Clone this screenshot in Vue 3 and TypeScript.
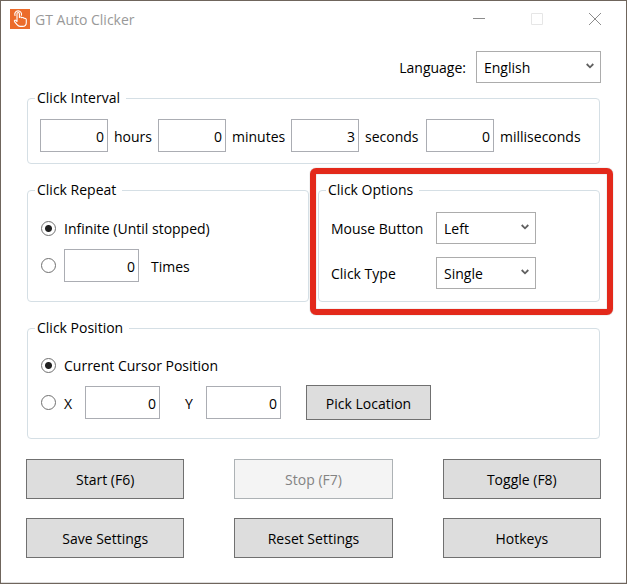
<script setup lang="ts">
import { ref } from 'vue'

interface Interval {
  id: string
  unit: string
  value: string
}

interface Action {
  label: string
  disabled?: boolean
}

const language = ref('English')
const intervals = ref<Interval[]>([
  { id: 'hours', unit: 'hours', value: '0' },
  { id: 'minutes', unit: 'minutes', value: '0' },
  { id: 'seconds', unit: 'seconds', value: '3' },
  { id: 'milliseconds', unit: 'milliseconds', value: '0' },
])
const repeat = ref<'infinite' | 'times'>('infinite')
const times = ref('0')
const mouseButton = ref('Left')
const clickType = ref('Single')
const position = ref<'cursor' | 'point'>('cursor')
const x = ref('0')
const y = ref('0')

const actions: Action[] = [
  { label: 'Start (F6)' },
  { label: 'Stop (F7)', disabled: true },
  { label: 'Toggle (F8)' },
  { label: 'Save Settings' },
  { label: 'Reset Settings' },
  { label: 'Hotkeys' },
]
</script>

<template>
  <main class="window">
    <header class="titlebar">
      <svg class="app-icon" viewBox="0 0 20 20" aria-hidden="true">
        <rect width="20" height="20" fill="#ec6c2b" />
        <path
          d="M7 12.500V4.700a1.200 1.200 0 0 1 2.400 0V8.500c.6-.8 2-.6 2.300.3.8-.6 2-.3 2.300.6 1-.3 2.300.2 2.300 1.400v2.700c0 2.200-1.500 3.900-3.700 3.900H10c-1.400 0-2.200-.7-3-1.700L4.500 12.600c-.5-1 .5-1.800 1.300-1.200L7 12.500M5 6.500a3.400 3.400 0 1 1 6.400-.2"
          fill="none" stroke="#fff" stroke-width="1.1" stroke-linejoin="round" stroke-linecap="round"
        />
      </svg>
      <h1 class="title">GT Auto Clicker</h1>
      <div class="controls">
        <button class="control" type="button" aria-label="Minimize">
          <svg viewBox="0 0 12 12"><path d="M0 5.5h12" stroke="#8c8c8c" fill="none" /></svg>
        </button>
        <button class="control" type="button" aria-label="Maximize" disabled>
          <svg viewBox="0 0 12 12"><path d="M.5.5h11v11H.5z" stroke="#e6e6e6" fill="none" /></svg>
        </button>
        <button class="control" type="button" aria-label="Close">
          <svg viewBox="0 0 12 12"><path d="M0 0l12 12M12 0L0 12" stroke="#8c8c8c" fill="none" /></svg>
        </button>
      </div>
    </header>

    <form class="content" @submit.prevent>
      <div class="language">
        <label for="language">Language:</label>
        <div class="select language-select">
          <select id="language" v-model="language"><option>English</option></select>
          <svg class="chevron" viewBox="0 0 8 6"><path d="M.7 1L4 4.300 7.300 1" /></svg>
        </div>
      </div>

      <fieldset class="group intervals">
        <legend>Click Interval</legend>
        <div v-for="item in intervals" :key="item.id" class="interval">
          <input :id="item.id" v-model="item.value" class="number" type="text" inputmode="numeric">
          <label :for="item.id">{{ item.unit }}</label>
        </div>
      </fieldset>

      <div class="columns">
        <fieldset class="group repeat">
          <legend>Click Repeat</legend>
          <div class="radio-row">
            <input id="repeat-infinite" v-model="repeat" type="radio" name="repeat" value="infinite">
            <label for="repeat-infinite">Infinite (Until stopped)</label>
          </div>
          <div class="radio-row">
            <input v-model="repeat" type="radio" name="repeat" value="times" aria-label="Repeat a number of times">
            <input id="times" v-model="times" class="number wide" type="text" inputmode="numeric">
            <label class="times-label" for="times">Times</label>
          </div>
        </fieldset>

        <div class="highlighted">
          <fieldset class="group options">
            <legend>Click Options</legend>
            <label for="mouse-button">Mouse Button</label>
            <div class="select">
              <select id="mouse-button" v-model="mouseButton"><option>Left</option></select>
              <svg class="chevron" viewBox="0 0 8 6"><path d="M.7 1L4 4.300 7.300 1" /></svg>
            </div>
            <label for="click-type">Click Type</label>
            <div class="select">
              <select id="click-type" v-model="clickType"><option>Single</option></select>
              <svg class="chevron" viewBox="0 0 8 6"><path d="M.7 1L4 4.300 7.300 1" /></svg>
            </div>
          </fieldset>
        </div>
      </div>

      <fieldset class="group position">
        <legend>Click Position</legend>
        <div class="radio-row">
          <input id="position-cursor" v-model="position" type="radio" name="position" value="cursor">
          <label for="position-cursor">Current Cursor Position</label>
        </div>
        <div class="point-row">
          <input v-model="position" type="radio" name="position" value="point" aria-label="Fixed position">
          <label class="axis" for="point-x">X</label>
          <input id="point-x" v-model="x" class="number wide" type="text" inputmode="numeric">
          <label class="axis axis-y" for="point-y">Y</label>
          <input id="point-y" v-model="y" class="number wide" type="text" inputmode="numeric">
          <button class="button pick" type="button">Pick Location</button>
        </div>
      </fieldset>

      <div class="actions">
        <button v-for="action in actions" :key="action.label" class="button" type="button" :disabled="action.disabled">
          {{ action.label }}
        </button>
      </div>
    </form>
  </main>
</template>

<style>
body {
  background: #fff;
}
</style>

<style scoped>
.window {
  box-sizing: border-box;
  min-height: 100vh;
  border: 1px solid #6f655c;
  background: #fff;
  box-shadow: inset 0 -1px #dcdcdc;
  color: #000;
  font: 14px/20px "Open Sans", "Noto Sans", sans-serif;
}

input,
select,
button {
  box-sizing: border-box;
  margin: 0;
  border-radius: 0;
  color: inherit;
  font: inherit;
}

label {
  padding-top: 2px;
}

.titlebar {
  display: flex;
  align-items: center;
  height: 36px;
  padding-left: 9px;
}

.app-icon {
  width: 20px;
  height: 20px;
}

.title {
  margin: 0 0 0 5px;
  padding-top: 2px;
  color: #999;
  font-size: 14px;
  font-weight: 400;
}

.controls {
  display: flex;
  margin-left: auto;
  padding-right: 2px;
}

.control {
  display: grid;
  place-items: center;
  width: 58px;
  height: 36px;
  padding: 0;
  border: 0;
  background: none;
}

.control svg {
  width: 12px;
  height: 12px;
  overflow: visible;
}

.content {
  padding: 14px 25px 24px;
}

.language {
  display: flex;
  align-items: center;
  justify-content: flex-end;
  gap: 10px;
}

.select {
  position: relative;
  width: 100px;
}

.language-select {
  width: 125px;
}

.select select {
  display: block;
  width: 100%;
  height: 32px;
  padding: 2px 24px 0 7px;
  border: 1px solid #acacac;
  background: #fff;
  appearance: none;
}

.chevron {
  position: absolute;
  top: 12px;
  right: 7px;
  width: 8px;
  height: 6px;
  fill: none;
  stroke: #606060;
  stroke-width: 1.8;
  pointer-events: none;
}

.group {
  min-width: 0;
  margin: 0;
  padding: 12px;
  border: 1px solid #d5dfe5;
  border-radius: 4px;
}

.group legend {
  margin-left: -5px;
  padding: 0 6px 0 2px;
}

.intervals {
  display: grid;
  grid-template-columns: 118px 133px 135px 1fr;
  margin: 5px 1px 16px;
  padding: 11px 12px;
}

.interval {
  display: flex;
  align-items: center;
  gap: 6px;
}

.number {
  width: 68px;
  height: 33px;
  padding: 2px 3px 0;
  border: 1px solid #abadb3;
  background: #fff;
  text-align: right;
}

.number.wide {
  width: 75px;
}

.columns {
  display: grid;
  grid-template-columns: 1fr 1fr;
  gap: 9px;
  margin: 0 1px 16px;
}

.radio-row,
.point-row {
  display: flex;
  align-items: center;
  gap: 8px;
}

.radio-row {
  min-height: 32px;
  margin-bottom: 5px;
}

.radio-row:last-child {
  margin-bottom: 0;
}

input[type="radio"] {
  flex: none;
  width: 15px;
  height: 15px;
  margin-left: 1px;
  border: 1px solid #707070;
  border-radius: 50%;
  background: #fff;
  appearance: none;
}

input[type="radio"]:checked {
  background: radial-gradient(circle, #212121 3px, #fff 4px);
}

.times-label {
  margin-left: 4px;
}

.highlighted {
  position: relative;
}

.highlighted::after {
  content: "";
  position: absolute;
  inset: -12px -13px -13px -8px;
  border: 6px solid #e3291b;
  border-radius: 6px;
  box-shadow: 0 0 1px #777, inset 0 0 1px #777;
  pointer-events: none;
}

.options {
  display: grid;
  grid-template-columns: 105px auto;
  justify-content: start;
  align-items: center;
  row-gap: 13px;
}

.position {
  margin: 0 1px 20px;
  padding-bottom: 18px;
}

.position .radio-row {
  min-height: 30px;
}

.axis {
  width: 13px;
}

.axis-y {
  margin-left: 17px;
}

.button {
  height: 40px;
  padding: 2px 8px 0;
  border: 1px solid #707070;
  background: #ddd;
}

.button:disabled {
  border-color: #adb2b5;
  background: #f4f4f4;
  color: #838383;
}

.pick {
  width: 125px;
  height: 35px;
  margin-left: 17px;
}

.actions {
  display: grid;
  grid-template-columns: repeat(3, 1fr);
  gap: 19px 50px;
}
</style>
